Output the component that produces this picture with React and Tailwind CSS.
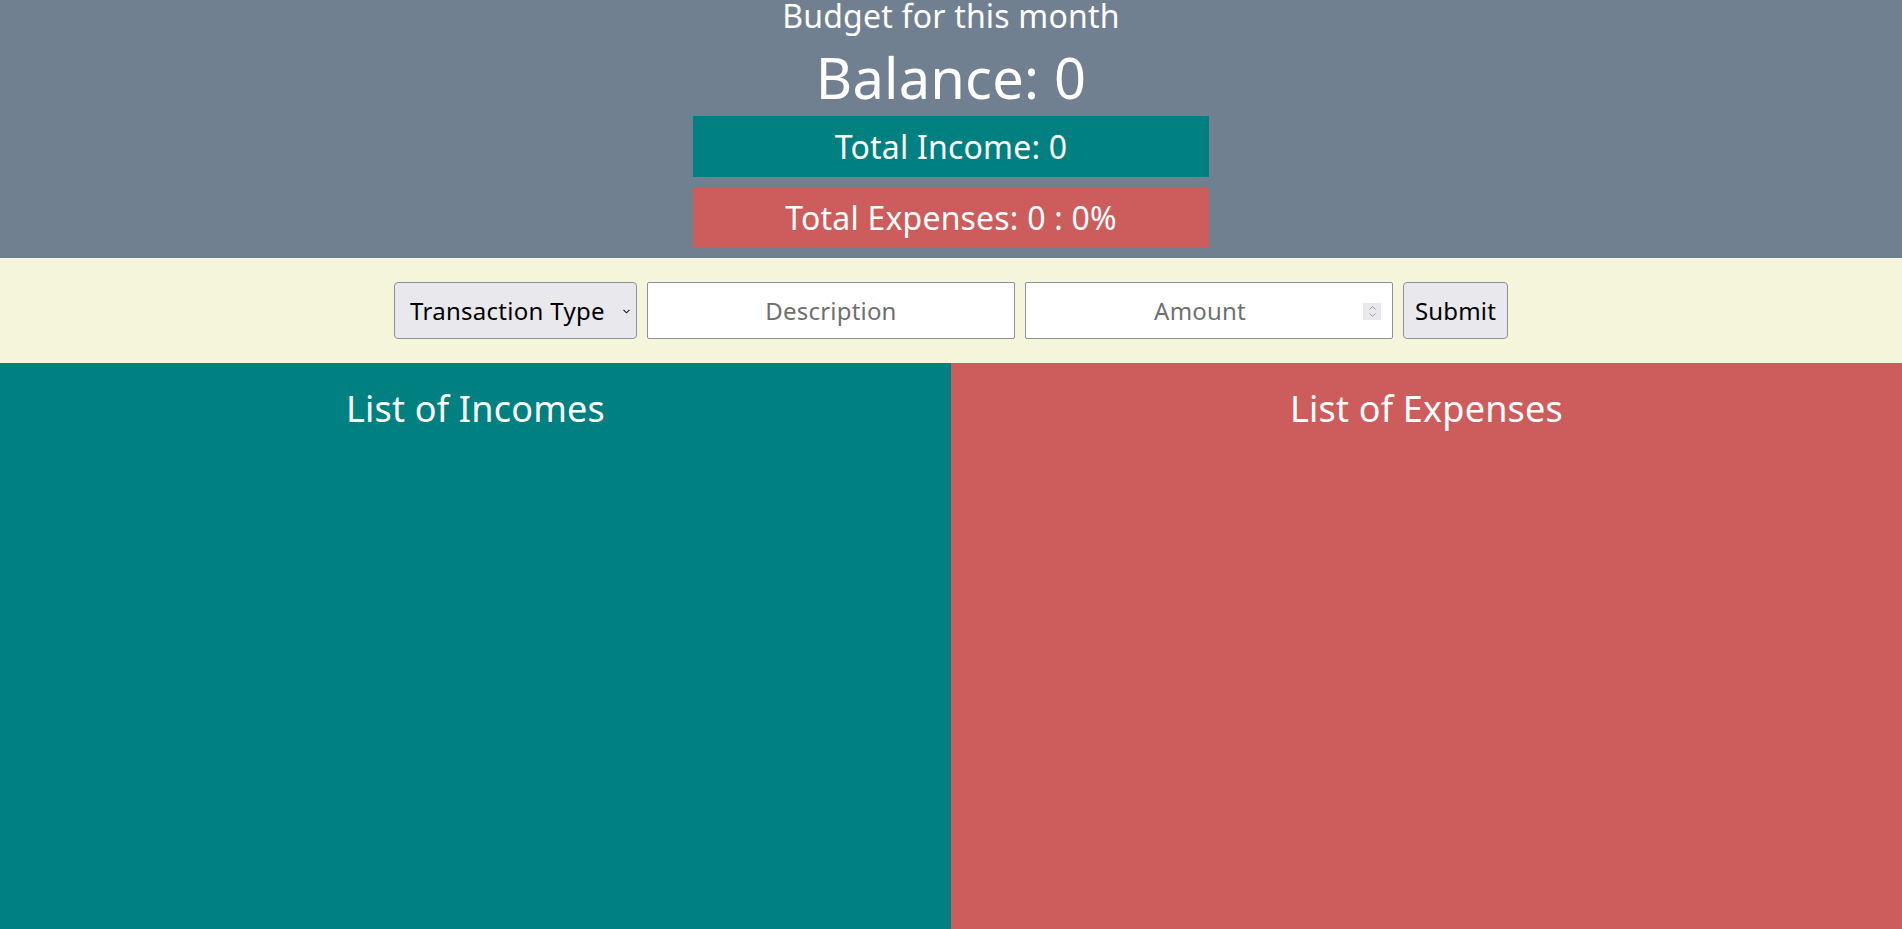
import React from "react";

export default function App() {
  return (
    <div
      className="min-h-screen flex flex-col text-white tracking-[0.012em]"
      style={{ fontFamily: '"Noto Sans", "Open Sans", sans-serif' }}
    >
      <header className="bg-[#708090] flex flex-col items-center pb-[10px]">
        <h2 className="text-[32px] leading-none h-[32px] font-normal">Budget for this month</h2>
        <h1 className="mt-[17px] text-[56px] leading-none font-normal">Balance: 0</h1>
        <div className="mt-[11px] w-[516px] h-[61px] bg-[#008080] flex items-center justify-center text-[32px] leading-[61px]">
          Total Income: 0
        </div>
        <div className="mt-[10px] w-[516px] h-[61px] bg-[#CD5C5C] flex items-center justify-center text-[32px] leading-[61px]">
          Total Expenses: 0 : 0%
        </div>
      </header>

      <form
        className="bg-[#F5F5DC] flex justify-center items-center gap-[10px] py-[24px]"
        onSubmit={(e) => e.preventDefault()}
      >
        <div className="relative w-[243px] h-[57px]">
          <select
            defaultValue=""
            className="appearance-none w-full h-full bg-[#e9e9ed] border border-[#8f8f9d] rounded-[4px] pl-[15px] pr-[24px] text-[24px] text-black outline-none tracking-[0.012em]"
          >
            <option value="">Transaction Type</option>
            <option value="income">Income</option>
            <option value="expense">Expense</option>
          </select>
          <svg
            className="absolute right-[7px] top-[27px] pointer-events-none"
            width="7"
            height="5"
            viewBox="0 0 7 5"
            fill="none"
          >
            <path d="M0.5 0.8 L3.5 3.8 L6.5 0.8" stroke="#1a1a1a" strokeWidth="1.1" />
          </svg>
        </div>
        <input
          type="text"
          placeholder="Description"
          className="w-[368px] h-[57px] bg-white border border-[#8f8f9d] rounded-[2px] px-[8px] text-[24px] text-center text-black placeholder:text-[#6f6f6f] outline-none"
        />
        <div className="relative w-[368px] h-[57px]">
          <input
            type="text"
            placeholder="Amount"
            className="w-full h-full bg-white border border-[#8f8f9d] rounded-[2px] pl-[8px] pr-[26px] text-[24px] text-center text-black placeholder:text-[#6f6f6f] outline-none"
          />
          <div className="absolute right-[12px] top-[21px] w-[18px] h-[17px] bg-[#e9e9ed] flex flex-col items-center justify-center gap-[3px] pointer-events-none">
            <svg width="7" height="4" viewBox="0 0 7 4" fill="none">
              <path d="M0.5 3.5 L3.5 0.6 L6.5 3.5" stroke="#9a9aa6" strokeWidth="1" />
            </svg>
            <svg width="7" height="4" viewBox="0 0 7 4" fill="none">
              <path d="M0.5 0.5 L3.5 3.4 L6.5 0.5" stroke="#9a9aa6" strokeWidth="1" />
            </svg>
          </div>
        </div>
        <button
          type="submit"
          className="w-[105px] h-[57px] bg-[#e9e9ed] border border-[#8f8f9d] rounded-[4px] px-[10px] text-[24px] text-black"
        >
          Submit
        </button>
      </form>

      <main className="flex-1 grid grid-cols-2">
        <section className="bg-[#008080] flex flex-col items-center pt-[28px]">
          <h2 className="text-[36px] leading-none font-normal">List of Incomes</h2>
        </section>
        <section className="bg-[#CD5C5C] flex flex-col items-center pt-[28px]">
          <h2 className="text-[36px] leading-none font-normal">List of Expenses</h2>
        </section>
      </main>
    </div>
  );
}
